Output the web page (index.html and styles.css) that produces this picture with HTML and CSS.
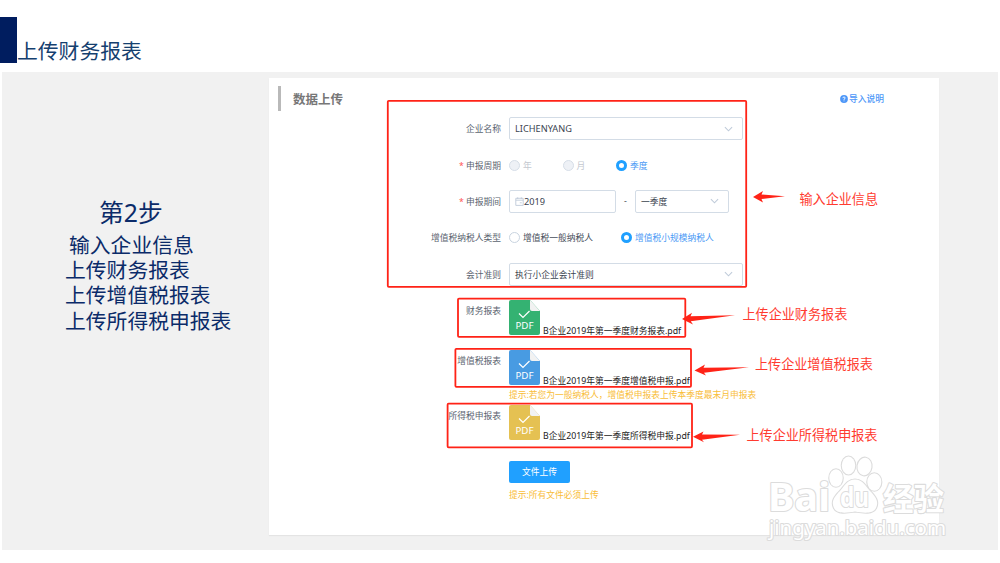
FILE: index.html
```html
<!DOCTYPE html>
<html lang="zh-CN">
<head>
    <meta charset="UTF-8">
    <meta name="viewport" content="width=device-width, initial-scale=1.0">
    <title>上传财务报表</title>
    <link rel="stylesheet" href="styles.css">
</head>
<body>
    <header class="slide-header">
        <div class="mark"></div>
        <h1>上传财务报表</h1>
    </header>

    <main class="stage">
        <aside class="steps">
            <h2>第2步</h2>
            <p class="first">输入企业信息</p>
            <p>上传财务报表</p>
            <p>上传增值税报表</p>
            <p>上传所得税申报表</p>
        </aside>

        <section class="card">
            <div class="card-header">
                <h3>数据上传</h3>
                <a class="help">
                    <svg width="8" height="8" viewBox="0 0 8 8">
                        <circle cx="4" cy="4" r="3.9" fill="#4d97f8"/>
                        <path d="M2.8 3.1 Q2.9 2 4 2 Q5.2 2 5.2 3 Q5.2 3.7 4 4.2 V4.9 M4 5.5 V6.3" fill="none" stroke="#fff" stroke-width="0.9"/>
                    </svg>导入说明
                </a>
            </div>

            <div class="row">
                <label>企业名称</label>
                <div class="select wide"><span class="latin">LICHENYANG</span>
                    <svg class="arrow" viewBox="0 0 10 6"><path d="M1 1 L5 5 L9 1"/></svg>
                </div>
            </div>
            <div class="row">
                <label><i>*</i> 申报周期</label>
                <div class="radio-group period">
                    <span class="radio disabled"><b></b>年</span>
                    <span class="radio disabled"><b></b>月</span>
                    <span class="radio checked"><b></b>季度</span>
                </div>
            </div>
            <div class="row">
                <label><i>*</i> 申报期间</label>
                <div class="select year">
                    <svg class="calendar" viewBox="0 0 9 9"><path d="M0.8 1.3 H8.2 V8.4 H0.8 Z M0.8 3.2 H8.2 M2.7 0.3 V2 M6.3 0.3 V2 M4.8 5.8 H6.8"/></svg><span class="latin">2019</span>
                </div>
                <span class="dash">-</span>
                <div class="select quarter">一季度
                    <svg class="arrow" viewBox="0 0 10 6"><path d="M1 1 L5 5 L9 1"/></svg>
                </div>
            </div>
            <div class="row">
                <label>增值税纳税人类型</label>
                <div class="radio-group taxpayer">
                    <span class="radio"><b></b>增值税一般纳税人</span>
                    <span class="radio checked"><b></b>增值税小规模纳税人</span>
                </div>
            </div>
            <div class="row">
                <label>会计准则</label>
                <div class="select wide">执行小企业会计准则
                    <svg class="arrow" viewBox="0 0 10 6"><path d="M1 1 L5 5 L9 1"/></svg>
                </div>
            </div>

            <div class="file-row">
                <label>财务报表</label>
                <svg class="pdf green" viewBox="0 0 31 35">
                    <path class="sheet" d="M2 0 H21 L31 11 V33 Q31 35 29 35 H2 Q0 35 0 33 V2 Q0 0 2 0 Z"/>
                    <path class="fold" d="M21 0 L31 11 H23 Q21 11 21 9 Z"/>
                    <path class="tick" d="M10 13.5 L14 17.5 L20.5 11"/>
                    <text x="15.5" y="29">PDF</text>
                </svg>
                <span class="file-name">B企业2019年第一季度财务报表.pdf</span>
            </div>
            <div class="file-row vat">
                <label>增值税报表</label>
                <svg class="pdf blue" viewBox="0 0 31 35">
                    <path class="sheet" d="M2 0 H21 L31 11 V33 Q31 35 29 35 H2 Q0 35 0 33 V2 Q0 0 2 0 Z"/>
                    <path class="fold" d="M21 0 L31 11 H23 Q21 11 21 9 Z"/>
                    <path class="tick" d="M10 13.5 L14 17.5 L20.5 11"/>
                    <text x="15.5" y="29">PDF</text>
                </svg>
                <span class="file-name">B企业2019年第一季度增值税申报.pdf</span>
            </div>
            <p class="tip vat-tip">提示:若您为一般纳税人，增值税申报表上传本季度最末月申报表</p>
            <div class="file-row">
                <label>所得税申报表</label>
                <svg class="pdf yellow" viewBox="0 0 31 35">
                    <path class="sheet" d="M2 0 H21 L31 11 V33 Q31 35 29 35 H2 Q0 35 0 33 V2 Q0 0 2 0 Z"/>
                    <path class="fold" d="M21 0 L31 11 H23 Q21 11 21 9 Z"/>
                    <path class="tick" d="M10 13.5 L14 17.5 L20.5 11"/>
                    <text x="15.5" y="29">PDF</text>
                </svg>
                <span class="file-name">B企业2019年第一季度所得税申报.pdf</span>
            </div>

            <button class="btn" type="button">文件上传</button>
            <p class="tip">提示:所有文件必须上传</p>
        </section>
    </main>

    <!-- red boxes, arrows and notes on top of the form -->
    <svg class="overlay" width="1000" height="563" viewBox="0 0 1000 563">
        <g class="frames">
            <rect x="387.8" y="100.8" width="358.4" height="186" rx="1"/>
            <rect x="458" y="298.6" width="227.3" height="38.2" rx="1"/>
            <rect x="455.4" y="348.8" width="235.6" height="38" rx="1"/>
            <rect x="447.6" y="403.7" width="244.4" height="43.6" rx="1"/>
        </g>
        <g class="arrows">
            <path d="M753 197 L763 191 L761.5 194.5 L785 196.3 L761.5 199 L763 202.5 Z"/>
            <path d="M682 319 L692 312.8 L690.5 316.3 L735 315.3 L690.8 321.3 L693 324.5 Z"/>
            <path d="M694.5 370.5 L705 364.6 L703.5 367.8 L749 367.3 L704 372.7 L706 375.5 Z"/>
            <path d="M693 436.8 L703.5 431.4 L702 434.6 L740 434.7 L702 439.7 L704 442.3 Z"/>
        </g>
        <g class="notes">
            <text x="799.5" y="204">输入企业信息</text>
            <text x="742.5" y="318.5">上传企业财务报表</text>
            <text x="755" y="369">上传企业增值税报表</text>
            <text x="746.5" y="440">上传企业所得税申报表</text>
        </g>
        <g class="watermark">
            <text class="brand" x="768" y="511" textLength="62" lengthAdjust="spacingAndGlyphs">Bai</text>
            <ellipse cx="836" cy="478" rx="6.7" ry="8.7"/>
            <ellipse cx="848.5" cy="465.5" rx="6.7" ry="9"/>
            <ellipse cx="864.5" cy="466.5" rx="7" ry="8.8" transform="rotate(8 864.5 466.5)"/>
            <ellipse cx="874.3" cy="482" rx="7" ry="8.7"/>
            <path d="M855 479.5 C863 479.5 866 487 870 491 C876 497 879 502 876 508 C873 514 864 513 855 511.5 C846 513 837 514 834 508 C831 502 834 497 840 491 C844 487 847 479.5 855 479.5 Z"/>
            <text class="du" x="840" y="507" textLength="29" lengthAdjust="spacingAndGlyphs">du</text>
            <text class="cn" x="883" y="509.5" textLength="61" lengthAdjust="spacingAndGlyphs">经验</text>
            <text class="site" x="769" y="535" textLength="177" lengthAdjust="spacingAndGlyphs">jingyan.baidu.com</text>
        </g>
    </svg>
</body>
</html>
```

FILE: styles.css
```css
* {
    box-sizing: border-box;
}
body {
    font-family: "Noto Sans", "Noto Sans CJK SC", sans-serif;
    margin: 0;
    height: 563px;
    overflow: hidden;
    background: #ffffff;
}
h1, h2, h3, p {
    margin: 0;
    font-weight: normal;
}
.slide-header {
    display: flex;
    height: 72px;
    padding-top: 17px;
}
.mark {
    width: 17px;
    height: 46px;
    background: #001d5f;
}
.slide-header h1 {
    font-size: 20.8px;
    line-height: 30px;
    margin-top: 19px;
    color: #15406f;
}
.stage {
    display: grid;
    grid-template-columns: 267px 670px;
    height: 478px;
    margin: 0 2px;
    padding-top: 6px;
    background: #f1f1f1;
}
.steps {
    padding: 117px 0 0 63px;
    color: #0b2b69;
}
.steps h2 {
    font-size: 24.8px;
    line-height: 34px;
    padding-left: 34px;
    margin-bottom: 4px;
}
.steps p {
    font-size: 20.8px;
    line-height: 25.2px;
    white-space: nowrap;
}
.steps p.first {
    padding-left: 4px;
}

.card {
    height: 457px;
    background: #ffffff;
    box-shadow: 0 1px 1px #e4e4e4;
    padding: 8px 0 0 9px;
    font-size: 8.75px;
    color: #48505c;
}
.card-header {
    display: flex;
    align-items: center;
    justify-content: space-between;
    height: 25px;
    margin-bottom: -0.5px;
    padding-right: 55px;
    border-left: 3px solid #b9b9b9;
}
.card-header h3 {
    font-size: 12.5px;
    font-weight: bold;
    padding-left: 12px;
    color: #777777;
}
.help {
    display: flex;
    align-items: center;
    gap: 1px;
    font-weight: 500;
    color: #4d97f8;
}
.row {
    display: flex;
    align-items: center;
    height: 36.4px;
}
label {
    width: 223px;
    margin-right: 8px;
    text-align: right;
    color: #5b6470;
}
label i {
    font-style: normal;
    color: #ff5050;
}
.select {
    display: flex;
    align-items: center;
    height: 23px;
    padding: 0 9px 0 5px;
    border: 1px solid #d3dce6;
    border-radius: 2px;
    color: #3c4450;
}
.latin {
    font-size: 9.2px;
}
.wide {
    width: 234px;
}
.year {
    width: 107px;
}
.quarter {
    width: 94px;
}
.dash {
    width: 19px;
    text-align: center;
}
.arrow {
    width: 9px;
    height: 6px;
    margin-left: auto;
    fill: none;
    stroke: #bfcbd9;
    stroke-width: 1.2;
}
.calendar {
    width: 9px;
    height: 9px;
    fill: none;
    stroke: #bfcbd9;
    stroke-width: 0.9;
}
.radio-group {
    display: flex;
}
.radio {
    display: flex;
    align-items: center;
    gap: 3px;
}
.radio b {
    width: 11px;
    height: 11px;
    border: 1px solid #c9d4e0;
    border-radius: 50%;
}
.period .radio {
    width: 53.5px;
}
.taxpayer .radio {
    width: 112px;
}
.radio.disabled {
    color: #c3c8cf;
}
.radio.disabled b {
    background: #eef1f6;
    border-color: #d6dee8;
}
.radio.checked {
    color: #4d9bf5;
    white-space: nowrap;
}
.radio.checked b {
    border: 3.7px solid #20a0ff;
}

.file-row {
    display: flex;
    height: 36px;
    margin-top: 7.5px;
}
.file-row label {
    line-height: 12px;
    padding-top: 5px;
}
.vat {
    margin-top: 14.5px;
}
.pdf {
    width: 31px;
    height: 35px;
}
.pdf text {
    font-size: 9.8px;
    text-anchor: middle;
    fill: #ffffff;
}
.green .sheet {
    fill: #34b272;
}
.blue .sheet {
    fill: #489be2;
}
.yellow .sheet {
    fill: #e5c152;
}
.pdf .fold {
    fill: #f2f2f2;
}
.tick {
    fill: none;
    stroke: #ffffff;
    stroke-width: 1.2;
}
.file-name {
    align-self: flex-end;
    line-height: 12px;
    margin: 0 0 -1px 3px;
    color: #222222;
    white-space: nowrap;
}
.tip {
    margin-left: 231px;
    line-height: 12px;
    font-size: 8.75px;
    color: #f9bd38;
}
.vat-tip {
    margin-top: 3px;
    margin-bottom: -4px;
}
.btn {
    display: block;
    width: 61px;
    height: 22px;
    margin: 20px 0 6px 231px;
    padding: 0;
    border: none;
    border-radius: 2px;
    background: #20a0ff;
    color: #ffffff;
    font-family: inherit;
    font-size: 8.75px;
}

.overlay {
    position: absolute;
    left: 0;
    top: 0;
    pointer-events: none;
}
.frames rect {
    fill: none;
    stroke: #ff2317;
    stroke-width: 1.8;
}
.arrows path {
    fill: #ff2317;
}
.notes text {
    font-size: 13.1px;
    fill: #ff3b30;
}
.watermark {
    fill: #ffffff;
    stroke: #dcdcdc;
    stroke-width: 2.2;
    stroke-linejoin: round;
    paint-order: stroke;
}
.brand {
    font-size: 39px;
    font-weight: bold;
}
.du {
    font-size: 27px;
    font-weight: bold;
}
.cn {
    font-size: 31px;
    font-weight: bold;
}
.site {
    font-size: 20px;
}
```
